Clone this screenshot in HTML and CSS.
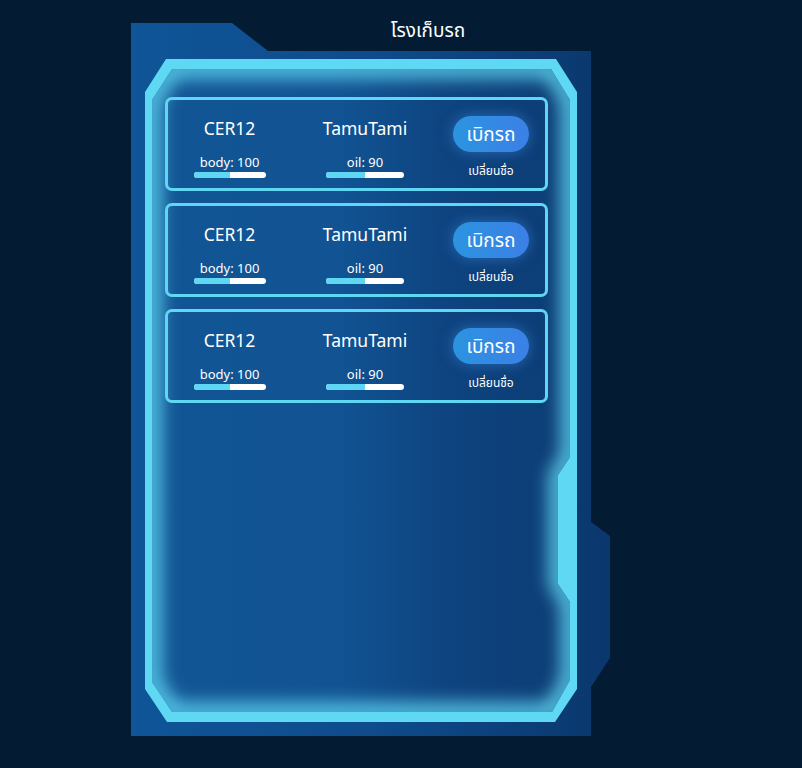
FILE: index.html
```html
<!DOCTYPE html>
<html lang="th">
<head>
<meta charset="utf-8">
<title>โรงเก็บรถ</title>
<link rel="stylesheet" href="styles.css">
</head>
<body>
<div class="stage">
  <svg class="frame" width="802" height="768" viewBox="0 0 802 768" aria-hidden="true">
    <defs>
      <linearGradient id="outerGrad" x1="0" y1="0" x2="1" y2="0">
        <stop offset="0" stop-color="#0f5597"/>
        <stop offset="0.5" stop-color="#0e4c8c"/>
        <stop offset="1" stop-color="#0a376d"/>
      </linearGradient>
      <linearGradient id="innerGrad" x1="0" y1="0" x2="1" y2="0">
        <stop offset="0" stop-color="#125595"/>
        <stop offset="0.45" stop-color="#115393"/>
        <stop offset="0.7" stop-color="#0e4480"/>
        <stop offset="1" stop-color="#0c3c74"/>
      </linearGradient>
      <clipPath id="innerClip">
        <path d="M172 69 L551 69 L570 100 L570 457 L558 475 L558 584 L570 602 L570 680 L552 712 L172 712 L152 682 L152 100 Z"/>
      </clipPath>
      <filter id="blur" x="-10%" y="-10%" width="120%" height="120%">
        <feGaussianBlur stdDeviation="9"/>
      </filter>
    </defs>
    <path d="M131 23 L232 23 L268 51 L591 51 L591 522 L610 536 L610 658 L591 687 L591 736 L131 736 Z" fill="url(#outerGrad)"/>
    <path d="M172 69 L551 69 L570 100 L570 457 L558 475 L558 584 L570 602 L570 680 L552 712 L172 712 L152 682 L152 100 Z" fill="url(#innerGrad)"/>
    <g clip-path="url(#innerClip)">
      <path d="M172 69 L551 69 L570 100 L570 457 L558 475 L558 584 L570 602 L570 680 L552 712 L172 712 L152 682 L152 100 Z" fill="none" stroke="#5fd6f2" stroke-width="16" filter="url(#blur)"/>
    </g>
    <path fill="#5ed8f3" fill-rule="evenodd" d="M166 59 L556 59 L577 92 L577 689 L555 722 L167 722 L145 689 L145 92 Z M172 69 L152 100 L152 682 L172 712 L552 712 L570 680 L570 602 L558 584 L558 475 L570 457 L570 100 L551 69 Z"/>
  </svg>

  <h1 class="title">โรงเก็บรถ</h1>

  <div class="list">
    <div class="car">
      <div class="col">
        <div class="name">CER12</div>
        <div class="stat">body: 100</div>
        <div class="bar bar-body"><div class="fill" style="width:50%"></div></div>
      </div>
      <div class="col">
        <div class="name">TamuTami</div>
        <div class="stat">oil: 90</div>
        <div class="bar bar-oil"><div class="fill" style="width:50%"></div></div>
      </div>
      <div class="col col-actions">
        <button class="btn">เบิกรถ</button>
        <div class="rename">เปลี่ยนชื่อ</div>
      </div>
    </div>
    <div class="car">
      <div class="col">
        <div class="name">CER12</div>
        <div class="stat">body: 100</div>
        <div class="bar bar-body"><div class="fill" style="width:50%"></div></div>
      </div>
      <div class="col">
        <div class="name">TamuTami</div>
        <div class="stat">oil: 90</div>
        <div class="bar bar-oil"><div class="fill" style="width:50%"></div></div>
      </div>
      <div class="col col-actions">
        <button class="btn">เบิกรถ</button>
        <div class="rename">เปลี่ยนชื่อ</div>
      </div>
    </div>
    <div class="car">
      <div class="col">
        <div class="name">CER12</div>
        <div class="stat">body: 100</div>
        <div class="bar bar-body"><div class="fill" style="width:50%"></div></div>
      </div>
      <div class="col">
        <div class="name">TamuTami</div>
        <div class="stat">oil: 90</div>
        <div class="bar bar-oil"><div class="fill" style="width:50%"></div></div>
      </div>
      <div class="col col-actions">
        <button class="btn">เบิกรถ</button>
        <div class="rename">เปลี่ยนชื่อ</div>
      </div>
    </div>
  </div>
</div>
</body>
</html>
```

FILE: styles.css
```css
* { box-sizing: border-box; }

html, body {
  margin: 0;
  padding: 0;
  background: #031c34;
}

body {
  font-family: "Noto Sans", "Noto Sans Thai", "DejaVu Sans", sans-serif;
  color: #ffffff;
}

.stage {
  position: relative;
  width: 802px;
  height: 768px;
  overflow: hidden;
}

.frame {
  position: absolute;
  left: 0;
  top: 0;
}

.title {
  position: relative;
  margin: 16px 0 0 0;
  padding-left: 54px;
  text-align: center;
  font-size: 19px;
  font-weight: 400;
  line-height: 28px;
}

.list {
  position: relative;
  margin: 53px 0 0 165px;
  width: 383px;
  display: flex;
  flex-direction: column;
  gap: 12px;
}

.car {
  height: 94px;
  border: 3px solid #5fd6f2;
  border-radius: 7px;
  display: grid;
  grid-template-columns: 123px 148px 106px;
}

.col {
  display: flex;
  flex-direction: column;
  align-items: center;
}

.name {
  margin-top: 17px;
  font-size: 17.5px;
  line-height: 22px;
}

.stat {
  margin-top: 15px;
  font-size: 13px;
  font-weight: 400;
  line-height: 16px;
}

.bar {
  margin-top: 2px;
  height: 6px;
  border-radius: 3px;
  background: #ffffff;
  overflow: hidden;
}

.bar-body { width: 72px; }
.bar-oil { width: 78px; }

.fill {
  height: 100%;
  background: #5fd6f2;
}

.col-actions {
  align-items: center;
  padding-right: 2px;
}

.btn {
  margin-top: 16px;
  width: 76px;
  height: 36px;
  border: none;
  border-radius: 18px;
  background: linear-gradient(90deg, #2b94e0, #3b80e6);
  box-shadow: 0 0 14px rgba(70, 150, 240, 0.5);
  color: #ffffff;
  font-family: inherit;
  font-size: 19px;
  line-height: 36px;
  padding: 0;
}

.rename {
  margin-top: 11px;
  font-size: 12px;
  font-weight: 400;
  line-height: 16px;
}
```
